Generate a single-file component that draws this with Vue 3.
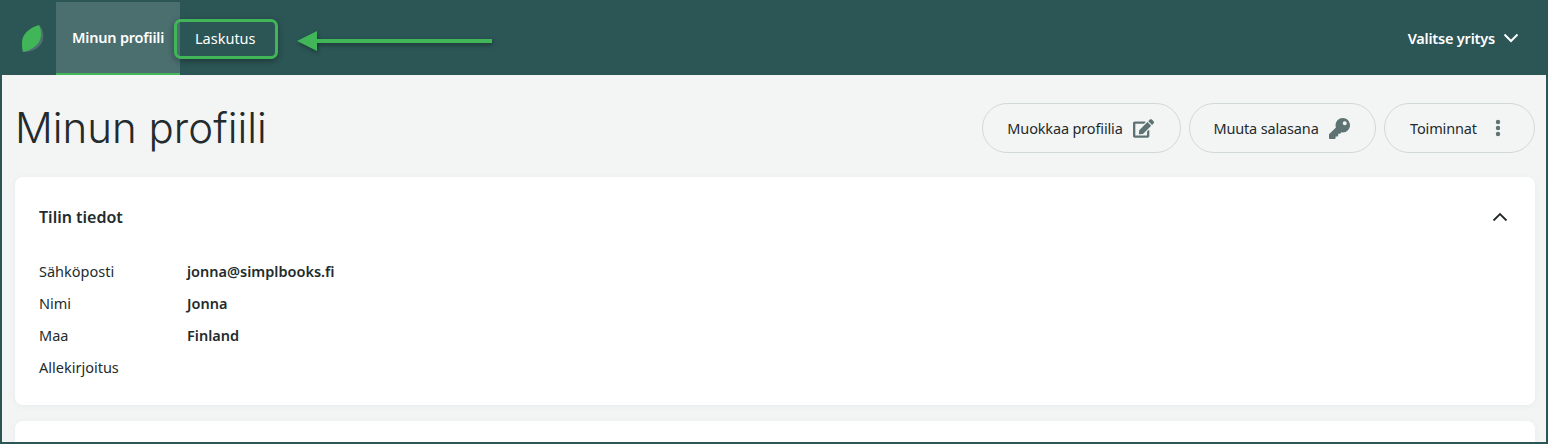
<script setup>
const rows = [
  { label: 'Sähköposti', value: 'jonna@simplbooks.fi' },
  { label: 'Nimi', value: 'Jonna' },
  { label: 'Maa', value: 'Finland' },
  { label: 'Allekirjoitus', value: '' }
]
</script>

<template>
  <div class="frame">
    <header class="topbar">
      <svg class="logo" width="23" height="28" viewBox="0 0 23 28">
        <path d="M18 0C22 4 23 9 22 14C21 21 13 27 3 27Z" fill="#4f6f70" />
        <path d="M18 0C8 3 1 9 1 18C1 22 1 25 2 27C12 25 21 18 20 8C20 5 19 2 18 0Z" fill="#41b658" />
      </svg>
      <nav class="tabs">
        <a class="tab active">Minun profiili</a>
        <a class="tab">Laskutus</a>
      </nav>
      <div class="company">
        <span>Valitse yritys</span>
        <svg width="16" height="10" viewBox="0 0 16 10"><path d="M1.500 1.500 8 8l6.500-6.500" fill="none" stroke="#fff" stroke-width="2" /></svg>
      </div>
    </header>

    <main class="page">
      <div class="title-row">
        <h1>Minun profiili</h1>
        <div class="actions">
          <button class="pill edit">
            Muokkaa profiilia
            <svg width="21" height="19" viewBox="0 0 576 512"><path fill="#5f7273" d="M402.600 83.200l90.200 90.200c3.800 3.800 3.800 10 0 13.800L274.400 405.600l-92.800 10.300c-12.400 1.400-22.900-9.100-21.500-21.500l10.300-92.800L388.800 83.200c3.800-3.800 10-3.800 13.800 0zm162-22.900l-48.800-48.800c-15.200-15.200-39.900-15.200-55.200 0l-35.400 35.400c-3.800 3.800-3.800 10 0 13.800l90.200 90.200c3.800 3.800 10 3.800 13.800 0l35.400-35.400c15.200-15.300 15.200-40 0-55.200zM384 346.200V448H64V128h229.800c3.200 0 6.200-1.300 8.500-3.500l40-40c7.600-7.600 2.200-20.500-8.500-20.500H48C21.500 64 0 85.500 0 112v352c0 26.500 21.500 48 48 48h352c26.500 0 48-21.500 48-48V306.200c0-10.700-12.900-16-20.500-8.500l-40 40c-2.200 2.300-3.500 5.300-3.500 8.500z" /></svg>
          </button>
          <button class="pill key">
            Muuta salasana
            <svg width="21" height="21" viewBox="0 0 512 512"><path fill="#5f7273" d="M512 176c0 97.200-78.800 176-176 176-11.200 0-22.200-1.100-32.800-3.100l-24 27c-4.500 5.100-11 8.100-17.900 8.100H224v40c0 13.300-10.700 24-24 24h-40v40c0 13.300-10.700 24-24 24H24c-13.300 0-24-10.700-24-24v-78.100c0-6.400 2.500-12.500 7-17l161.800-161.800C163.100 213.800 160 195.300 160 176 160 78.800 238.800 0 336 0c97.500 0 176 78.500 176 176zM336 128c0 26.500 21.500 48 48 48s48-21.500 48-48-21.500-48-48-48-48 21.500-48 48z" /></svg>
          </button>
          <button class="pill more">
            Toiminnat
            <svg width="6" height="18" viewBox="0 0 6 18"><circle cx="3" cy="3" r="2.200" fill="#5f7273" /><circle cx="3" cy="9" r="2.200" fill="#5f7273" /><circle cx="3" cy="15" r="2.200" fill="#5f7273" /></svg>
          </button>
        </div>
      </div>

      <section class="card">
        <div class="card-head">
          <h2>Tilin tiedot</h2>
          <svg width="16" height="10" viewBox="0 0 16 10"><path d="M1.500 8.500 8 2l6.500 6.500" fill="none" stroke="#232b2c" stroke-width="1.800" /></svg>
        </div>
        <dl class="details">
          <div v-for="row in rows" :key="row.label" class="detail">
            <dt>{{ row.label }}</dt>
            <dd>{{ row.value }}</dd>
          </div>
        </dl>
      </section>
      <section class="card next"></section>
    </main>

    <!-- annotation drawn on top of the screenshot -->
    <div class="callout"></div>
    <svg class="arrow" width="200" height="24" viewBox="0 0 200 24">
      <path d="M0 10 20 0v8h175v4H20v8Z" fill="#41b658" />
    </svg>
  </div>
</template>

<style>
html, body {
  margin: 0;
  height: 100%;
  overflow: hidden;
}
</style>

<style scoped>
.frame {
  position: relative;
  box-sizing: border-box;
  width: 1548px;
  height: 444px;
  border: solid #2c5555;
  border-width: 0 2px 2px;
  background: #f3f5f5;
  overflow: hidden;
  font-family: "Noto Sans", sans-serif;
  font-size: 14.5px;
  color: #232b2c;
}
.topbar {
  display: flex;
  align-items: center;
  height: 75px;
  padding-right: 27px;
  background: #2c5555;
  color: #fff;
}
.logo {
  margin: 2px 12px 0 19px;
  flex: none;
}
.tabs {
  display: flex;
  align-self: flex-end;
  height: 73px;
}
.tab {
  display: flex;
  align-items: center;
  padding: 0 22px 2px 15px;
  box-sizing: border-box;
}
.tab.active {
  width: 124px;
  padding: 0 0 2px 16px;
  background: #4b6e6e;
  border-bottom: 2px solid #41b658;
  font-weight: 600;
  letter-spacing: -0.2px;
}
.company {
  display: flex;
  align-items: center;
  gap: 8px;
  margin-left: auto;
  font-weight: 600;
  letter-spacing: -0.2px;
}
.page {
  padding: 28px 11px 0 13px;
}
.title-row {
  display: flex;
  align-items: center;
  justify-content: space-between;
  height: 50px;
  margin-bottom: 24px;
}
h1 {
  margin: 0;
  font-family: Inter, sans-serif;
  font-size: 42px;
  font-weight: 300;
  line-height: 50px;
}
.actions {
  display: flex;
  gap: 8px;
}
.pill {
  display: flex;
  align-items: center;
  justify-content: center;
  gap: 10px;
  height: 50px;
  padding: 0;
  border: 1px solid #d0d8d8;
  border-radius: 25px;
  background: transparent;
  color: inherit;
  font: inherit;
  letter-spacing: -0.15px;
}
.edit { width: 199px; padding-right: 2px; }
.key { width: 187px; padding-right: 2px; }
.more { width: 151px; gap: 18px; padding-right: 8px; }
.card {
  padding: 0 24px;
  background: #fff;
  border-radius: 8px;
  box-shadow: 0 1px 6px rgba(44, 85, 85, 0.06);
}
.card-head {
  display: flex;
  align-items: center;
  justify-content: space-between;
  height: 80px;
  padding-right: 3px;
}
h2 {
  margin: 0;
  font-size: 16px;
  font-weight: 600;
}
.details {
  margin: -2px 0 0;
  padding-bottom: 22px;
}
.detail {
  display: flex;
  align-items: center;
  height: 32px;
}
dt {
  width: 148px;
}
dd {
  margin: 0;
  font-weight: 600;
}
.next {
  height: 40px;
  margin-top: 16px;
}
.callout {
  position: absolute;
  left: 172px;
  top: 19px;
  width: 104px;
  height: 40px;
  box-sizing: border-box;
  border: 3px solid #41b658;
  border-radius: 7px;
  box-shadow: 0 2px 6px rgba(0, 0, 0, 0.35);
}
.arrow {
  position: absolute;
  left: 295px;
  top: 31px;
  filter: drop-shadow(1px 2px 2px rgba(0, 0, 0, 0.35));
}
</style>
